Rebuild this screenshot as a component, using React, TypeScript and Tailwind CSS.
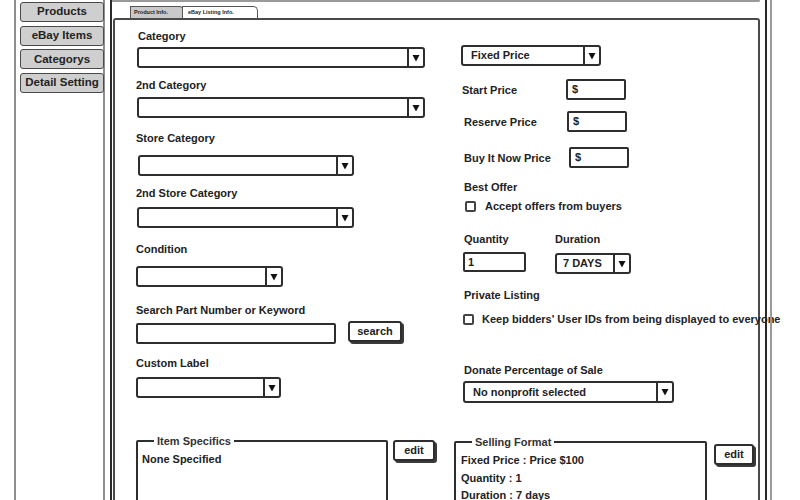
import React from "react";

const Arrow = () => (
  <svg width="8" height="8" viewBox="0 0 8 8">
    <polygon points="0.5,1 7.5,1 4,7.5" fill="#111" />
  </svg>
);

function Label({ className = "", children }: { className?: string; children: React.ReactNode }) {
  return <div className={"leading-[14px] text-[11px] font-bold text-[#222] whitespace-nowrap " + className}>{children}</div>;
}

function Select({ className = "", text = "", textClass = "pl-[8px]" }: { className?: string; text?: string; textClass?: string }) {
  return (
    <div className={"flex shrink-0 border-2 border-[#2e2e2e] rounded-[3px] bg-white " + className}>
      <div className={"flex-1 flex items-center text-[11px] font-bold text-[#222] whitespace-nowrap " + textClass}>{text}</div>
      <div className="w-[16px] border-l-2 border-[#2e2e2e] flex items-center justify-center">
        <Arrow />
      </div>
    </div>
  );
}

function Input({ className = "", text = "", textClass = "pl-[4px]" }: { className?: string; text?: string; textClass?: string }) {
  return (
    <div className={"flex items-center shrink-0 border-2 border-[#2e2e2e] rounded-[2px] bg-white text-[11px] font-bold text-[#222] " + textClass + " " + className}>
      {text}
    </div>
  );
}

function Btn({ className = "", children }: { className?: string; children: React.ReactNode }) {
  return (
    <div className={"flex items-center justify-center shrink-0 border-2 border-[#2e2e2e] rounded-[3px] bg-white shadow-[2px_2px_0_#3a3a3a] text-[11px] font-bold text-[#222] " + className}>
      {children}
    </div>
  );
}

function Check({ className = "" }: { className?: string }) {
  return <div className={"w-[11px] h-[11px] shrink-0 border-2 border-[#444] rounded-[2px] bg-white " + className} />;
}

function SideBtn({ children }: { children: React.ReactNode }) {
  return (
    <div className="h-[20px] w-[84px] flex items-center justify-center bg-[#cfcfcf] border-[1.5px] border-[#4a4a4a] rounded-[3px] text-[11.5px] font-bold text-[#222] whitespace-nowrap">
      {children}
    </div>
  );
}

export default function App() {
  return (
    <div className="w-[800px] h-[500px] overflow-hidden bg-white flex font-['Liberation_Sans',Arial,sans-serif]">
      {/* sidebar */}
      <div className="ml-[14px] w-[91px] h-full shrink-0 border-l-2 border-r-2 border-[#8e8e8e] flex flex-col gap-[3.7px] pt-[2px] pl-[4px]">
        <SideBtn>Products</SideBtn>
        <SideBtn>eBay Items</SideBtn>
        <SideBtn>Categorys</SideBtn>
        <SideBtn>Detail Setting</SideBtn>
      </div>

      {/* main frame */}
      <div className="ml-[5px] w-[657px] h-full shrink-0 border-l-2 border-r-2 border-[#2a2a2a] flex flex-col">
        <div className="h-[3px] mr-[5px] border-b-2 border-r-2 border-[#9a9a9a] rounded-br-[3px]" />
        {/* tabs */}
        <div className="mt-[4px] h-[12px] flex items-end pl-[18px]">
          <div className="h-[12px] w-[54px] bg-[#c9c9c9] border-t-[1.5px] border-l-[1.5px] border-r-[1.5px] border-[#555] rounded-tr-[5px] flex items-center pl-[3px] text-[5.5px] font-bold text-[#222] whitespace-nowrap">
            Product Info.
          </div>
          <div className="-ml-[2px] h-[12px] w-[76px] bg-white border-t-[1.5px] border-l-[1.5px] border-r-[1.5px] border-[#555] rounded-tr-[5px] flex items-center pl-[5px] text-[5.5px] font-bold text-[#222] whitespace-nowrap">
            eBay Listing Info.
          </div>
        </div>
        {/* panel */}
        <div className="ml-[1px] mr-[5px] flex-1 border-2 border-b-0 border-[#4a4a4a] rounded-t-[3px] flex pl-[21px]">
          {/* left column */}
          <div className="flex flex-col w-[318px] shrink-0">
            <Label className="mt-[9px] ml-[2px]">Category</Label>
            <Select className="mt-[4px] ml-[1px] w-[288px] h-[21px]" />
            <Label className="mt-[10px]">2nd Category</Label>
            <Select className="mt-[5px] ml-[1px] w-[288px] h-[21px]" />
            <Label className="mt-[13px]">Store Category</Label>
            <Select className="mt-[10px] ml-[2px] w-[216px] h-[21px]" />
            <Label className="mt-[10px]">2nd Store Category</Label>
            <Select className="mt-[7px] ml-[1px] w-[217px] h-[21px]" />
            <Label className="mt-[14px]">Condition</Label>
            <Select className="mt-[10px] w-[147px] h-[21px]" />
            <Label className="mt-[16px]">Search Part Number or Keyword</Label>
            <div className="mt-[6px] flex items-start">
              <Input className="w-[200px] h-[21px]" />
              <Btn className="ml-[12px] -mt-[2px] w-[54px] h-[21px]">search</Btn>
            </div>
            <Label className="mt-[12px]">Custom Label</Label>
            <Select className="mt-[7px] w-[145px] h-[21px]" />
            <div className="mt-[36px] flex items-start">
              <fieldset className="w-[252px] h-[110px] shrink-0 border-2 border-[#2e2e2e] rounded-[2px] px-[4px]">
                <legend className="ml-[12px] px-[3px] leading-[14px] text-[11px] font-bold text-[#333]">Item Specifics</legend>
                <div className="mt-[3px] leading-[17.5px] text-[11px] font-bold text-[#222]">None Specified</div>
              </fieldset>
              <Btn className="ml-[5px] mt-[6px] w-[42px] h-[21px]">edit</Btn>
            </div>
          </div>

          {/* right column */}
          <div className="flex flex-col flex-1">
            <Select className="mt-[25px] ml-[7px] w-[140px] h-[21px]" text="Fixed Price" />
            <div className="mt-[13px] flex items-center">
              <Label className="ml-[8px] w-[104px]">Start Price</Label>
              <Input className="w-[60px] h-[21px]" text="$" />
            </div>
            <div className="mt-[11px] flex items-center">
              <Label className="ml-[10px] w-[103px]">Reserve Price</Label>
              <Input className="w-[60px] h-[21px]" text="$" />
            </div>
            <div className="mt-[15px] flex items-center">
              <Label className="ml-[10px] w-[105px]">Buy It Now Price</Label>
              <Input className="w-[60px] h-[21px]" text="$" />
            </div>
            <Label className="mt-[12px] ml-[10px]">Best Offer</Label>
            <div className="mt-[5px] ml-[11px] flex items-center h-[14px]">
              <Check />
              <span className="ml-[9px] text-[11px] font-bold text-[#222] whitespace-nowrap">Accept offers from buyers</span>
            </div>
            <div className="mt-[19px] flex">
              <Label className="ml-[10px] w-[91px]">Quantity</Label>
              <Label>Duration</Label>
            </div>
            <div className="mt-[6px] flex items-start">
              <Input className="ml-[9px] w-[63px] h-[20px]" text="1" textClass="pl-[3px]" />
              <Select className="ml-[29px] mt-[1px] w-[76px] h-[21px]" text="7 DAYS" textClass="pl-[6px]" />
            </div>
            <Label className="mt-[14px] ml-[10px]">Private Listing</Label>
            <div className="mt-[10px] ml-[9px] flex items-center h-[14px]">
              <Check />
              <span className="ml-[8px] text-[11px] font-bold text-[#222] whitespace-nowrap">Keep bidders' User IDs from being displayed to everyone</span>
            </div>
            <Label className="mt-[37px] ml-[10px]">Donate Percentage of Sale</Label>
            <Select className="mt-[4px] ml-[9px] w-[211px] h-[22px]" text="No nonprofit selected" />
            <div className="mt-[32px] flex items-start">
              <fieldset className="w-[253px] h-[110px] shrink-0 border-2 border-[#2e2e2e] rounded-[2px] px-[5px]">
                <legend className="ml-[11px] px-[3px] leading-[14px] text-[11px] font-bold text-[#333]">Selling Format</legend>
                <div className="mt-[3px] leading-[17.5px] text-[11px] font-bold text-[#222]">
                  <div>Fixed Price : Price $100</div>
                  <div>Quantity : 1</div>
                  <div>Duration : 7 days</div>
                </div>
              </fieldset>
              <Btn className="ml-[7px] mt-[9px] w-[40px] h-[21px]">edit</Btn>
            </div>
          </div>
        </div>
      </div>

      <div className="ml-[3px] w-[2px] h-full shrink-0 bg-[#9a9a9a]" />
    </div>
  );
}
